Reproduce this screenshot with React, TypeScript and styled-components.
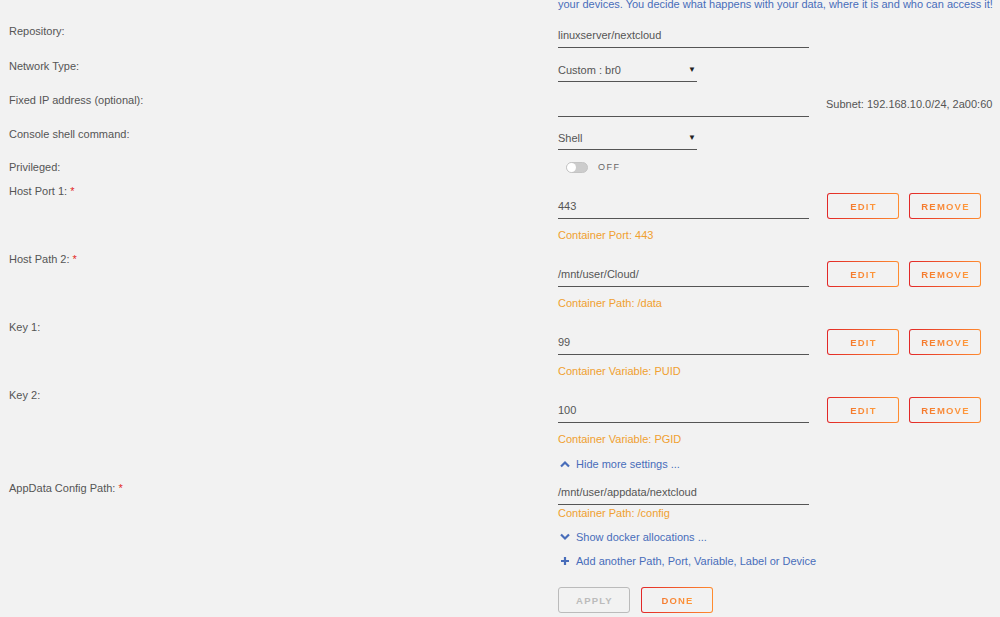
import React from 'react'
import styled, { createGlobalStyle } from 'styled-components'

// ─── Constants ───────────────────────────────────────────────────────────────
const LABEL_COL = 549
const INPUT_WIDTH = 251
const SELECT_WIDTH = 139
const FONT = `"Liberation Sans", Arial, sans-serif`

const BLUE = '#486dba'
const ORANGE = '#f0a030'
const TEXT = '#555'

// ─── Data ────────────────────────────────────────────────────────────────────
const SIMPLE_ROWS = [
  { label: 'Repository:', kind: 'input', value: 'linuxserver/nextcloud', gap: 9 },
  { label: 'Network Type:', kind: 'select', value: 'Custom : br0', gap: 9 },
  { label: 'Fixed IP address (optional):', kind: 'ip', value: '', gap: 8 },
  { label: 'Console shell command:', kind: 'select', value: 'Shell', gap: 8 },
] as const

const CONFIG_ROWS = [
  { label: 'Host Port 1:', required: true, value: '443', hint: 'Container Port: 443' },
  { label: 'Host Path 2:', required: true, value: '/mnt/user/Cloud/', hint: 'Container Path: /data' },
  { label: 'Key 1:', required: false, value: '99', hint: 'Container Variable: PUID' },
  { label: 'Key 2:', required: false, value: '100', hint: 'Container Variable: PGID' },
]

// ─── Icons ───────────────────────────────────────────────────────────────────
const ChevronUp = () => (
  <svg width="10" height="8" viewBox="0 0 10 8" aria-hidden="true">
    <path d="M1 6.5 L5 2.5 L9 6.5" fill="none" stroke={BLUE} strokeWidth="2.2" />
  </svg>
)

const ChevronDown = () => (
  <svg width="10" height="8" viewBox="0 0 10 8" aria-hidden="true">
    <path d="M1 1.5 L5 5.5 L9 1.5" fill="none" stroke={BLUE} strokeWidth="2.2" />
  </svg>
)

const Plus = () => (
  <svg width="10" height="10" viewBox="0 0 10 10" aria-hidden="true">
    <path d="M5 1 V9 M1 5 H9" fill="none" stroke={BLUE} strokeWidth="2.2" />
  </svg>
)

// ─── Component ───────────────────────────────────────────────────────────────
const App = () => (
  <>
    <GlobalStyle />
    <Page>
      <Intro>
        your devices. You decide what happens with your data, where it is and who can access it!
      </Intro>

      {SIMPLE_ROWS.map(({ label, kind, value, gap }) => (
        <Row key={label} $gap={gap}>
          <Label>{label}</Label>
          {kind === 'select' ? (
            <Select>
              <span>{value}</span>
              <Caret>▼</Caret>
            </Select>
          ) : (
            <InputWrap>
              <TextInput>{value}</TextInput>
              {kind === 'ip' && <Subnet>Subnet: 192.168.10.0/24, 2a00:60</Subnet>}
            </InputWrap>
          )}
        </Row>
      ))}

      <Row $gap={6}>
        <Label>Privileged:</Label>
        <SwitchRow>
          <Switch>
            <Knob />
          </Switch>
          <SwitchText>OFF</SwitchText>
        </SwitchRow>
      </Row>

      {CONFIG_ROWS.map(({ label, required, value, hint }) => (
        <Row key={label} $gap={0}>
          <Label>
            {label} {required && <Star>*</Star>}
          </Label>
          <ConfigBody>
            <InputLine>
              <TextInput>{value}</TextInput>
              <Actions>
                <OutlineButton><GradText>EDIT</GradText></OutlineButton>
                <OutlineButton><GradText>REMOVE</GradText></OutlineButton>
              </Actions>
            </InputLine>
            <Hint>{hint}</Hint>
          </ConfigBody>
        </Row>
      ))}

      <Row $gap={5}>
        <span />
        <LinkLine $h={20}><ChevronUp />Hide more settings ...</LinkLine>
      </Row>

      <Row $gap={4}>
        <Label>
          AppData Config Path: <Star>*</Star>
        </Label>
        <div>
          <TextInput>/mnt/user/appdata/nextcloud</TextInput>
          <Hint $tight>Container Path: /config</Hint>
        </div>
      </Row>

      <Row $gap={0}>
        <span />
        <div>
          <LinkLine $h={24}><ChevronDown />Show docker allocations ...</LinkLine>
          <LinkLine $h={24}><Plus />Add another Path, Port, Variable, Label or Device</LinkLine>
        </div>
      </Row>

      <Row $gap={0}>
        <span />
        <Footer>
          <DisabledButton>APPLY</DisabledButton>
          <OutlineButton><GradText>DONE</GradText></OutlineButton>
        </Footer>
      </Row>
    </Page>
  </>
)

// ─── Styles ──────────────────────────────────────────────────────────────────
const GlobalStyle = createGlobalStyle`
  html, body {
    margin: 0;
    background: #f2f2f2;
    font-family: ${FONT};
    overflow: hidden;
  }
`

const Page = styled.div`
  width: 1000px;
  height: 617px;
  padding-left: 9px;
  box-sizing: border-box;
  overflow: hidden;
  font-size: 11px;
  color: ${TEXT};
`

const Intro = styled.div`
  margin: -5px 0 9px ${LABEL_COL}px;
  height: 18px;
  line-height: 18px;
  color: ${BLUE};
  white-space: nowrap;
`

const Row = styled.div<{ $gap: number }>`
  display: grid;
  grid-template-columns: ${LABEL_COL}px 1fr;
  align-items: start;
  margin-bottom: ${({ $gap }) => $gap}px;
`

const Label = styled.div`
  line-height: 18px;
  color: ${TEXT};
`

const Star = styled.span`
  color: #e22828;
`

const InputWrap = styled.div`
  display: flex;
  align-items: center;
  gap: 17px;
`

const TextInput = styled.div`
  width: ${INPUT_WIDTH}px;
  height: 26px;
  line-height: 26px;
  border-bottom: 1px solid #555;
  box-sizing: border-box;
  color: ${TEXT};
  white-space: nowrap;
`

const Subnet = styled.span`
  color: ${TEXT};
  white-space: nowrap;
`

const Select = styled.div`
  width: ${SELECT_WIDTH}px;
  height: 25px;
  padding-top: 1px;
  border-bottom: 1px solid #555;
  box-sizing: border-box;
  display: flex;
  align-items: center;
  justify-content: space-between;
  padding-right: 1px;
  color: ${TEXT};
`

const Caret = styled.span`
  font-size: 8px;
  color: #222;
`

const SwitchRow = styled.div`
  display: flex;
  align-items: center;
  gap: 10px;
  height: 18px;
  padding-left: 8px;
`

const Switch = styled.div`
  width: 22px;
  height: 11px;
  border-radius: 6px;
  background: #ccc;
  border: 1px solid #c4c4c4;
  box-sizing: border-box;
  position: relative;
`

const Knob = styled.div`
  position: absolute;
  left: 0;
  top: 0;
  width: 9px;
  height: 9px;
  border-radius: 50%;
  background: #fff;
`

const SwitchText = styled.span`
  font-size: 9px;
  letter-spacing: 1.5px;
  color: #666;
`

const ConfigBody = styled.div`
  padding-top: 11px;
`

const InputLine = styled.div`
  display: flex;
  align-items: flex-end;
  gap: 18px;
`

const Actions = styled.div`
  display: flex;
  gap: 10px;
`

const OutlineButton = styled.div`
  width: 72px;
  height: 26px;
  box-sizing: border-box;
  display: flex;
  align-items: center;
  justify-content: center;
  padding-left: 1px;
  border: 1px solid transparent;
  border-radius: 3px;
  background:
    linear-gradient(#f2f2f2, #f2f2f2) padding-box,
    linear-gradient(90deg, #e22828, #ff8c2f) border-box;
`

const GradText = styled.span`
  font-size: 9.5px;
  font-weight: bold;
  letter-spacing: 1.2px;
  background: linear-gradient(90deg, #f4792d, #ff9a3c);
  -webkit-background-clip: text;
  background-clip: text;
  color: transparent;
`

const DisabledButton = styled.div`
  width: 72px;
  height: 26px;
  box-sizing: border-box;
  display: flex;
  align-items: center;
  justify-content: center;
  padding-left: 1px;
  border: 1px solid #bbb;
  border-radius: 3px;
  font-size: 9.5px;
  font-weight: bold;
  letter-spacing: 1.2px;
  color: #bbb;
`

const Hint = styled.div<{ $tight?: boolean }>`
  color: ${ORANGE};
  line-height: ${({ $tight }) => ($tight ? 15 : 18)}px;
  margin-top: ${({ $tight }) => ($tight ? 1 : 7)}px;
  height: ${({ $tight }) => ($tight ? 15 : 24)}px;
`

const LinkLine = styled.div<{ $h: number }>`
  display: flex;
  align-items: center;
  gap: 6px;
  height: ${({ $h }) => $h}px;
  padding-left: 2px;
  color: ${BLUE};
`

const Footer = styled.div`
  display: flex;
  gap: 11px;
  padding-top: 14px;
`

export default App
